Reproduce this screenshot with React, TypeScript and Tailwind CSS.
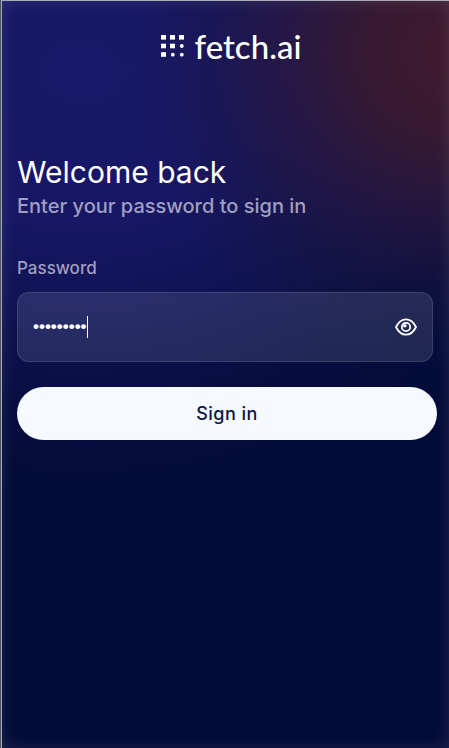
import { useState } from "react";

function FetchLogo() {
  return (
    <div className="flex items-center gap-2.5 pl-3 text-white">
      <svg width="24" height="22" viewBox="0 0 24 22" fill="currentColor" aria-hidden="true">
        <rect x="0" y="0" width="5" height="4.6" />
        <rect x="9" y="0" width="5" height="4.6" />
        <rect x="18" y="0" width="5" height="4.6" />
        <rect x="0" y="8.700" width="5" height="4.6" />
        <rect x="9" y="8.700" width="5" height="4.6" />
        <circle cx="20.8" cy="11" r="1.900" />
        <rect x="0" y="17.2" width="5" height="4.6" />
        <circle cx="11.8" cy="19.7" r="1.900" />
        <circle cx="20.8" cy="19.7" r="1.900" />
      </svg>
      <span className="font-[Lato,sans-serif] text-[33px] leading-8 font-medium">fetch.ai</span>
    </div>
  );
}

function EyeIcon() {
  return (
    <svg width="24" height="20" viewBox="0 0 24 20" fill="none" stroke="currentColor" strokeWidth="1.800" aria-hidden="true">
      <path d="M2 10C4.500 5 7.800 2.300 12 2.300S19.500 5 22 10c-2.500 5-5.800 7.700-10 7.700S4.500 15 2 10Z" strokeLinejoin="round" />
      <circle cx="12" cy="10" r="4.200" />
      <circle cx="10.800" cy="8.700" r="1.800" fill="currentColor" stroke="none" />
    </svg>
  );
}

export default function App() {
  const [password, setPassword] = useState("fetchai12");
  const [visible, setVisible] = useState(false);

  return (
    <div className="flex min-h-screen border-l border-[#4a5068] bg-[#020c38] font-[Inter,sans-serif]">
      <main className="min-w-0 flex-1 border-t border-l border-[#a9abb9] bg-[radial-gradient(ellipse_320px_320px_at_100%_50px,#401a2e_0%,#3a1a30f0_25%,#2c183ab8_50%,#1e153c60_75%,#18143c00_100%),radial-gradient(ellipse_540px_430px_at_80px_70px,#18186a_0%,#171765_35%,#111456d0_60%,#0a104870_80%,#020c3800_100%)] pr-4 pb-8 pl-[15px] shadow-[inset_0_0_16px_#ffffff1c]">
        <header className="flex justify-center pt-[29px]">
          <FetchLogo />
        </header>
        <section className="pt-[90px]">
          <h1 className="text-[30px] leading-10 text-white">Welcome back</h1>
          <p className="text-xl leading-7 font-medium text-[#a09fc0]">Enter your password to sign in</p>
        </section>
        <form className="pt-9" onSubmit={(event) => event.preventDefault()}>
          <label htmlFor="password" className="block text-[17px] leading-6 font-medium text-[#a09fc0]">
            Password
          </label>
          <div className="mt-3 flex h-[70px] items-center rounded-xl border border-white/12 bg-[#e0e4ff]/12 pr-3.5 pl-[15px] text-white">
            <input
              id="password"
              type={visible ? "text" : "password"}
              value={password}
              onChange={(event) => setPassword(event.target.value)}
              autoFocus
              className="peer h-10 max-w-full min-w-0 field-sizing-content bg-transparent font-['Liberation_Sans',sans-serif] text-[17px] font-bold text-white caret-transparent outline-none"
            />
            <span className="invisible h-[22px] w-px shrink-0 bg-white peer-focus:visible" />
            <button type="button" className="ml-auto shrink-0" aria-label="Show password" onClick={() => setVisible(!visible)}>
              <EyeIcon />
            </button>
          </div>
          <div className="-mr-1 pt-[25px]">
            <button type="submit" className="h-[53px] w-full rounded-full bg-[#f6faff] text-lg font-medium tracking-wide text-[#0b1742]">
              Sign in
            </button>
          </div>
        </form>
      </main>
    </div>
  );
}
